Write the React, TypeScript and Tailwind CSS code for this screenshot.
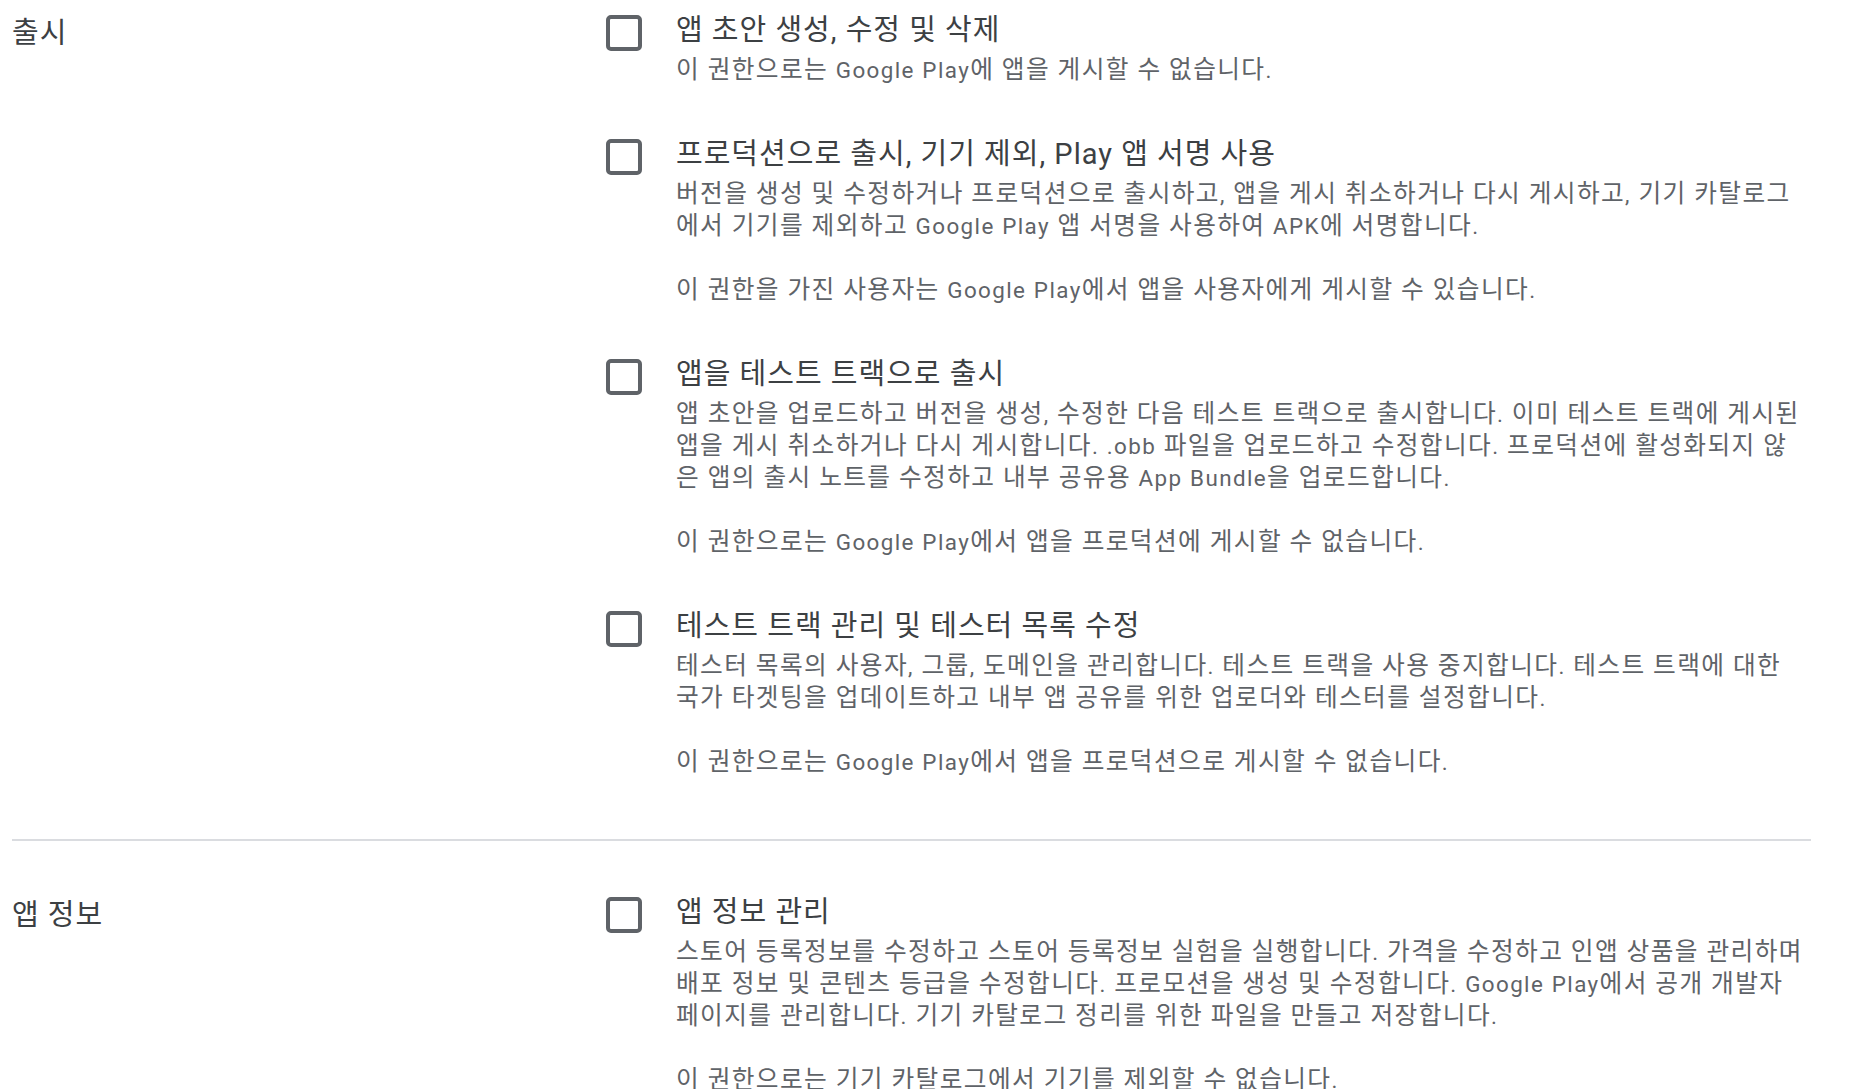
import React from 'react';

type Permission = {
  title: string;
  details: string[];
};

type Section = {
  label: string;
  items: Permission[];
};

const sections: Section[] = [
  {
    label: '출시',
    items: [
      {
        title: '앱 초안 생성, 수정 및 삭제',
        details: ['이 권한으로는 Google Play에 앱을 게시할 수 없습니다.'],
      },
      {
        title: '프로덕션으로 출시, 기기 제외, Play 앱 서명 사용',
        details: [
          '버전을 생성 및 수정하거나 프로덕션으로 출시하고, 앱을 게시 취소하거나 다시 게시하고, 기기 카탈로그에서 기기를 제외하고 Google Play 앱 서명을 사용하여 APK에 서명합니다.',
          '이 권한을 가진 사용자는 Google Play에서 앱을 사용자에게 게시할 수 있습니다.',
        ],
      },
      {
        title: '앱을 테스트 트랙으로 출시',
        details: [
          '앱 초안을 업로드하고 버전을 생성, 수정한 다음 테스트 트랙으로 출시합니다. 이미 테스트 트랙에 게시된 앱을 게시 취소하거나 다시 게시합니다. .obb 파일을 업로드하고 수정합니다. 프로덕션에 활성화되지 않은 앱의 출시 노트를 수정하고 내부 공유용 App Bundle을 업로드합니다.',
          '이 권한으로는 Google Play에서 앱을 프로덕션에 게시할 수 없습니다.',
        ],
      },
      {
        title: '테스트 트랙 관리 및 테스터 목록 수정',
        details: [
          '테스터 목록의 사용자, 그룹, 도메인을 관리합니다. 테스트 트랙을 사용 중지합니다. 테스트 트랙에 대한 국가 타겟팅을 업데이트하고 내부 앱 공유를 위한 업로더와 테스터를 설정합니다.',
          '이 권한으로는 Google Play에서 앱을 프로덕션으로 게시할 수 없습니다.',
        ],
      },
    ],
  },
  {
    label: '앱 정보',
    items: [
      {
        title: '앱 정보 관리',
        details: [
          '스토어 등록정보를 수정하고 스토어 등록정보 실험을 실행합니다. 가격을 수정하고 인앱 상품을 관리하며 배포 정보 및 콘텐츠 등급을 수정합니다. 프로모션을 생성 및 수정합니다. Google Play에서 공개 개발자 페이지를 관리합니다. 기기 카탈로그 정리를 위한 파일을 만들고 저장합니다.',
          '이 권한으로는 기기 카탈로그에서 기기를 제외할 수 없습니다.',
        ],
      },
    ],
  },
];

// Latin runs sit a little smaller than the hangul around them
const mixed = (text: string) =>
  text.split(/([A-Za-z.,]+)/).map((part, i) =>
    i % 2 === 1 ? (
      <span key={i} className="text-[22.4px]">
        {part}
      </span>
    ) : (
      part
    )
  );

const PermissionRow: React.FC<{ item: Permission }> = ({ item }) => (
  <label className="flex items-start gap-[34px] cursor-pointer">
    <span className="mt-[9px] w-[36px] h-[36px] shrink-0 rounded-[5px] border-[4px] border-[#5f6368] bg-white" />
    <span className="flex-1 min-w-0">
      <span className="block text-[29px] leading-[48px] tracking-[1px] text-[#3c4043]">{item.title}</span>
      {item.details.map((d, i) => (
        <span
          key={i}
          className={`block text-[24.7px] leading-[32px] tracking-[1.4px] text-[#5f6368] ${i > 0 ? 'mt-[32px]' : ''}`}
        >
          {mixed(d)}
        </span>
      ))}
    </span>
  </label>
);

export default function App() {
  return (
    <div
      className="min-h-screen bg-white pl-[12px] pr-[48px] pt-[6px]"
      style={{ fontFamily: 'Roboto, "Noto Sans CJK KR", sans-serif' }}
    >
      {sections.map((section, si) => (
        <div key={section.label}>
          {si > 0 && <div className="h-[2px] bg-[#dadce0]" />}
          <div className={`flex ${si > 0 ? 'pt-[47px]' : ''} pb-[61px]`}>
            <div className="w-[594px] shrink-0 pt-[3px] text-[29px] leading-[48px] tracking-[1px] text-[#3c4043]">
              {section.label}
            </div>
            <div className="flex-1 flex flex-col gap-[44px]">
              {section.items.map((item) => (
                <PermissionRow key={item.title} item={item} />
              ))}
            </div>
          </div>
        </div>
      ))}
    </div>
  );
}
